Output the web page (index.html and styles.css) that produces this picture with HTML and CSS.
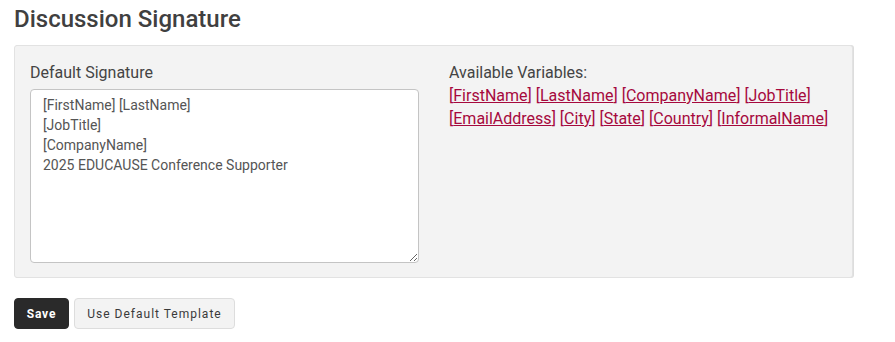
FILE: index.html
```html
<!DOCTYPE html>
<html>
<head>
<meta charset="utf-8">
<link rel="stylesheet" href="styles.css">
</head>
<body>
<h2 class="title">Discussion Signature</h2>
<div class="panel">
  <div class="col-left">
    <label class="label">Default Signature</label>
    <textarea class="sig">[FirstName] [LastName]
[JobTitle]
[CompanyName]
2025 EDUCAUSE Conference Supporter</textarea>
  </div>
  <div class="col-right">
    <div class="label">Available Variables:</div>
    <div class="vars">
      <span class="var">[<a href="#">FirstName</a>]</span>
      <span class="var">[<a href="#">LastName</a>]</span>
      <span class="var">[<a href="#">CompanyName</a>]</span>
      <span class="var">[<a href="#">JobTitle</a>]</span>
      <span class="var">[<a href="#">EmailAddress</a>]</span>
      <span class="var">[<a href="#">City</a>]</span>
      <span class="var">[<a href="#">State</a>]</span>
      <span class="var">[<a href="#">Country</a>]</span>
      <span class="var">[<a href="#">InformalName</a>]</span>
    </div>
  </div>
</div>
<div class="actions">
  <button class="btn btn-dark">Save</button>
  <button class="btn btn-light">Use Default Template</button>
</div>
</body>
</html>
```
FILE: styles.css
```css
html, body { margin: 0; padding: 0; background: #fff; }
body {
  font-family: Roboto, "Noto Sans", sans-serif;
  color: #444;
  padding: 0 14px;
}
.title {
  margin: 0;
  padding-top: 5px;
  font-size: 24px;
  font-weight: 500;
  line-height: 28px;
  color: #404040;
}
.panel {
  margin-top: 12px;
  background: #f3f3f3;
  border: 1px solid #e2e2e2;
  border-radius: 3px;
  box-shadow: 1px 0 0 #ddd;
  display: flex;
  padding: 0 15px;
  box-sizing: border-box;
  width: 839px;
  height: 233px;
}
.col-left { width: 389px; padding-top: 16px; }
.col-right { margin-left: 30px; padding-top: 16px; }
.label {
  display: block;
  font-size: 16px;
  line-height: 22px;
  color: #444;
  margin-bottom: 5px;
}
.col-right .label { margin-bottom: 0; }
.sig {
  display: block;
  width: 389px;
  height: 174px;
  box-sizing: border-box;
  border: 1px solid #c4c4c4;
  border-radius: 4px;
  background: #fff;
  padding: 5px 12px 4px;
  font-family: Roboto, "Noto Sans", sans-serif;
  font-size: 14px;
  line-height: 20px;
  color: #555;
  resize: vertical;
  margin: 0;
}
.vars {
  font-size: 16px;
  line-height: 23px;
  color: #a6093d;
  width: 390px;
}
.var a { color: #a6093d; text-decoration: underline; }
.actions {
  margin-top: 20px;
  display: flex;
  gap: 5px;
}
.btn {
  height: 31px;
  border-radius: 4px;
  font-family: Roboto, "Noto Sans", sans-serif;
  font-size: 12px;
  letter-spacing: 0.8px;
  padding: 0 10px;
  cursor: pointer;
}
.btn-dark {
  background: #2a2a2a;
  color: #fff;
  border: 1px solid #2a2a2a;
  font-weight: 700;
  width: 55px;
}
.btn-light {
  background: #f3f3f3;
  color: #3a3a3a;
  border: 1px solid #ddd;
  font-weight: 400;
  letter-spacing: 1px;
  width: 161px;
}
```
